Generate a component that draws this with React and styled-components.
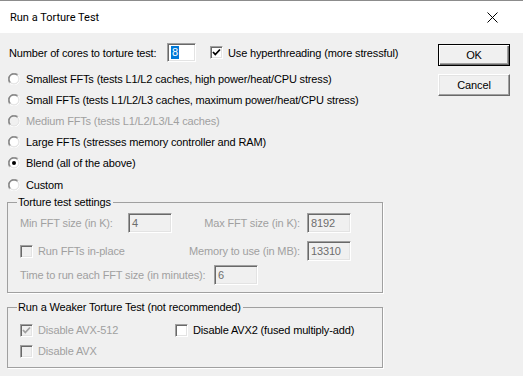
import React from "react";
import styled, { createGlobalStyle } from "styled-components";

const GlobalStyle = createGlobalStyle`
  html, body {
    margin: 0;
    padding: 0;
    background: #f0f0f0;
  }
  body {
    font-family: "Liberation Sans", Arial, sans-serif;
    font-size: 11px;
    letter-spacing: -0.15px;
    color: #000;
  }
`;

const Window = styled.div`
  width: 523px;
  height: 376px;
  display: flex;
  flex-direction: column;
  background: #f0f0f0;
  overflow: hidden;
`;

const TitleBar = styled.div`
  height: 32px;
  flex: none;
  background: #fff;
  border-top: 1px solid #8c8c8c;
  display: flex;
  align-items: center;
  justify-content: space-between;
  padding: 0 25px 0 10px;
  font-family: Roboto, "Noto Sans", sans-serif;
  font-size: 11px;
  letter-spacing: 0;
  color: #000;
`;

const Body = styled.div`
  display: flex;
  padding-top: 10px;
`;

const Main = styled.div`
  width: 390px;
  display: flex;
  flex-direction: column;
`;

const Side = styled.div`
  display: flex;
  flex-direction: column;
  gap: 8px;
  margin-left: 48px;
  padding-top: 1px;
`;

const Button = styled.div`
  width: 72px;
  height: 22px;
  box-sizing: border-box;
  display: flex;
  align-items: center;
  justify-content: center;
  background: #f0f0f0;
  border: 1px solid;
  border-color: ${(p) => (p.$default ? "#000" : "#fff #696969 #696969 #fff")};
  box-shadow: ${(p) =>
    p.$default
      ? "inset 1px 1px #fff, inset -1px -1px #696969, inset -2px -2px #a0a0a0"
      : "inset -1px -1px #a0a0a0, inset 1px 1px #e3e3e3"};
`;

const CoresRow = styled.div`
  display: flex;
  align-items: center;
  height: 19px;
  padding-left: 9px;
`;

const Label = styled.span`
  width: ${(p) => (p.$w ? `${p.$w}px` : "auto")};
  flex: none;
  white-space: nowrap;
  text-align: ${(p) => (p.$right ? "right" : "left")};
  color: ${(p) => (p.$disabled ? "#a0a0a0" : "#000")};
`;

const Field = styled.div`
  width: ${(p) => p.$w}px;
  height: ${(p) => p.$h || 20}px;
  flex: none;
  box-sizing: border-box;
  margin-left: ${(p) => p.$ml || 0}px;
  border: 1px solid;
  border-color: #a0a0a0 #fff #fff #a0a0a0;
  box-shadow: inset 1px 1px #696969, inset -1px -1px #e3e3e3;
  background: ${(p) => (p.$disabled ? "#f0f0f0" : "#fff")};
  color: ${(p) => (p.$disabled ? "#6d6d6d" : "#000")};
  display: flex;
  align-items: center;
  padding-left: 3px;
`;

const Selected = styled.span`
  background: #0078d7;
  color: #fff;
  line-height: 13px;
  padding: 0 1px;
`;

const Check = styled.label`
  display: flex;
  align-items: center;
  gap: 5px;
  width: ${(p) => (p.$w ? `${p.$w}px` : "auto")};
  margin-left: ${(p) => p.$ml || 0}px;
  white-space: nowrap;
  color: ${(p) => (p.$disabled ? "#a0a0a0" : "#000")};
`;

const Box = styled.span`
  width: 13px;
  height: 13px;
  flex: none;
  box-sizing: border-box;
  border: 1px solid;
  border-color: #a0a0a0 #fff #fff #a0a0a0;
  box-shadow: inset 1px 1px #696969, inset -1px -1px #e3e3e3;
  background: ${(p) => (p.$disabled ? "#f0f0f0" : "#fff")};
  display: flex;
  align-items: center;
  justify-content: center;
`;

const RadioList = styled.div`
  display: flex;
  flex-direction: column;
  margin-top: 6px;
`;

const RadioRow = styled.div`
  height: 21.2px;
  display: flex;
  align-items: center;
  gap: 6px;
  padding-left: 8px;
  white-space: nowrap;
  color: ${(p) => (p.$disabled ? "#a0a0a0" : "#000")};
`;

const Group = styled.fieldset`
  margin: ${(p) => p.$mt}px 0 0 7px;
  width: 376px;
  height: ${(p) => p.$h}px;
  box-sizing: border-box;
  padding: 0 0 0 12px;
  border: 1px solid #a0a0a0;
  box-shadow: 1px 1px 0 #fff;
  min-width: 0;
`;

const Legend = styled.legend`
  padding: 0 2px 0 1px;
  margin-left: -3px;
  color: #000;
  line-height: 13px;
`;

const SettingRow = styled.div`
  display: flex;
  align-items: center;
  height: 20px;
  margin-top: ${(p) => p.$mt}px;
`;

function Radio({ checked, disabled }) {
  return (
    <svg width="12" height="12" viewBox="0 0 12 12">
      <circle cx="6" cy="6" r="4" fill={disabled ? "#f0f0f0" : "#fff"} />
      <path d="M1.76 10.24 A6 6 0 0 1 10.24 1.76" stroke="#a0a0a0" strokeWidth="1" fill="none" />
      <path d="M1.76 10.24 A6 6 0 0 0 10.24 1.76" stroke="#fff" strokeWidth="1" fill="none" />
      <path d="M2.46 9.54 A5 5 0 0 1 9.54 2.46" stroke="#696969" strokeWidth="1" fill="none" />
      <path d="M2.46 9.54 A5 5 0 0 0 9.54 2.46" stroke="#e3e3e3" strokeWidth="1" fill="none" />
      {checked && <circle cx="6" cy="6" r="2" fill="#000" />}
    </svg>
  );
}

function CheckBox({ checked, disabled }) {
  return (
    <Box $disabled={disabled}>
      {checked && (
        <svg width="9" height="9" viewBox="0 0 9 9">
          <path d="M1 4 L3.3 6.5 L8 1.5" stroke={disabled ? "#a0a0a0" : "#000"} strokeWidth="1.8" fill="none" />
        </svg>
      )}
    </Box>
  );
}

const options = [
  { text: "Smallest FFTs (tests L1/L2 caches, high power/heat/CPU stress)" },
  { text: "Small FFTs (tests L1/L2/L3 caches, maximum power/heat/CPU stress)" },
  { text: "Medium FFTs (tests L1/L2/L3/L4 caches)", disabled: true },
  { text: "Large FFTs (stresses memory controller and RAM)" },
  { text: "Blend (all of the above)", checked: true },
  { text: "Custom" },
];

export default function App() {
  return (
    <Window>
      <GlobalStyle />
      <TitleBar>
        <span>Run a Torture Test</span>
        <svg width="11" height="11" viewBox="0 0 11 11">
          <path d="M0.5 0.5 L10.5 10.5 M10.5 0.5 L0.5 10.5" stroke="#000" strokeWidth="1" />
        </svg>
      </TitleBar>
      <Body>
        <Main>
          <CoresRow>
            <Label $w={158}>Number of cores to torture test:</Label>
            <Field $w={29} $h={19}>
              <Selected>8</Selected>
            </Field>
            <Check $ml={14}>
              <CheckBox checked />
              Use hyperthreading (more stressful)
            </Check>
          </CoresRow>

          <RadioList>
            {options.map((o) => (
              <RadioRow key={o.text} $disabled={o.disabled}>
                <Radio checked={o.checked} disabled={o.disabled} />
                {o.text}
              </RadioRow>
            ))}
          </RadioList>

          <Group $mt={1} $h={97}>
            <Legend>Torture test settings</Legend>
            <SettingRow $mt={4}>
              <Label $w={108} $disabled>Min FFT size (in K):</Label>
              <Field $w={44} $disabled>4</Field>
              <Label $w={128} $right $disabled>Max FFT size (in K):</Label>
              <Field $w={44} $ml={7} $disabled>8192</Field>
            </SettingRow>
            <SettingRow $mt={8}>
              <Check $disabled $w={152}>
                <CheckBox disabled />
                Run FFTs in-place
              </Check>
              <Label $w={128} $right $disabled>Memory to use (in MB):</Label>
              <Field $w={44} $ml={7} $disabled>13310</Field>
            </SettingRow>
            <SettingRow $mt={4}>
              <Label $w={194} $disabled>Time to run each FFT size (in minutes):</Label>
              <Field $w={44} $disabled>6</Field>
            </SettingRow>
          </Group>

          <Group $mt={8} $h={67}>
            <Legend>Run a Weaker Torture Test (not recommended)</Legend>
            <SettingRow $mt={6}>
              <Check $disabled $w={155}>
                <CheckBox checked disabled />
                Disable AVX-512
              </Check>
              <Check>
                <CheckBox />
                Disable AVX2 (fused multiply-add)
              </Check>
            </SettingRow>
            <SettingRow $mt={1}>
              <Check $disabled>
                <CheckBox disabled />
                Disable AVX
              </Check>
            </SettingRow>
          </Group>
        </Main>
        <Side>
          <Button $default>OK</Button>
          <Button>Cancel</Button>
        </Side>
      </Body>
    </Window>
  );
}
